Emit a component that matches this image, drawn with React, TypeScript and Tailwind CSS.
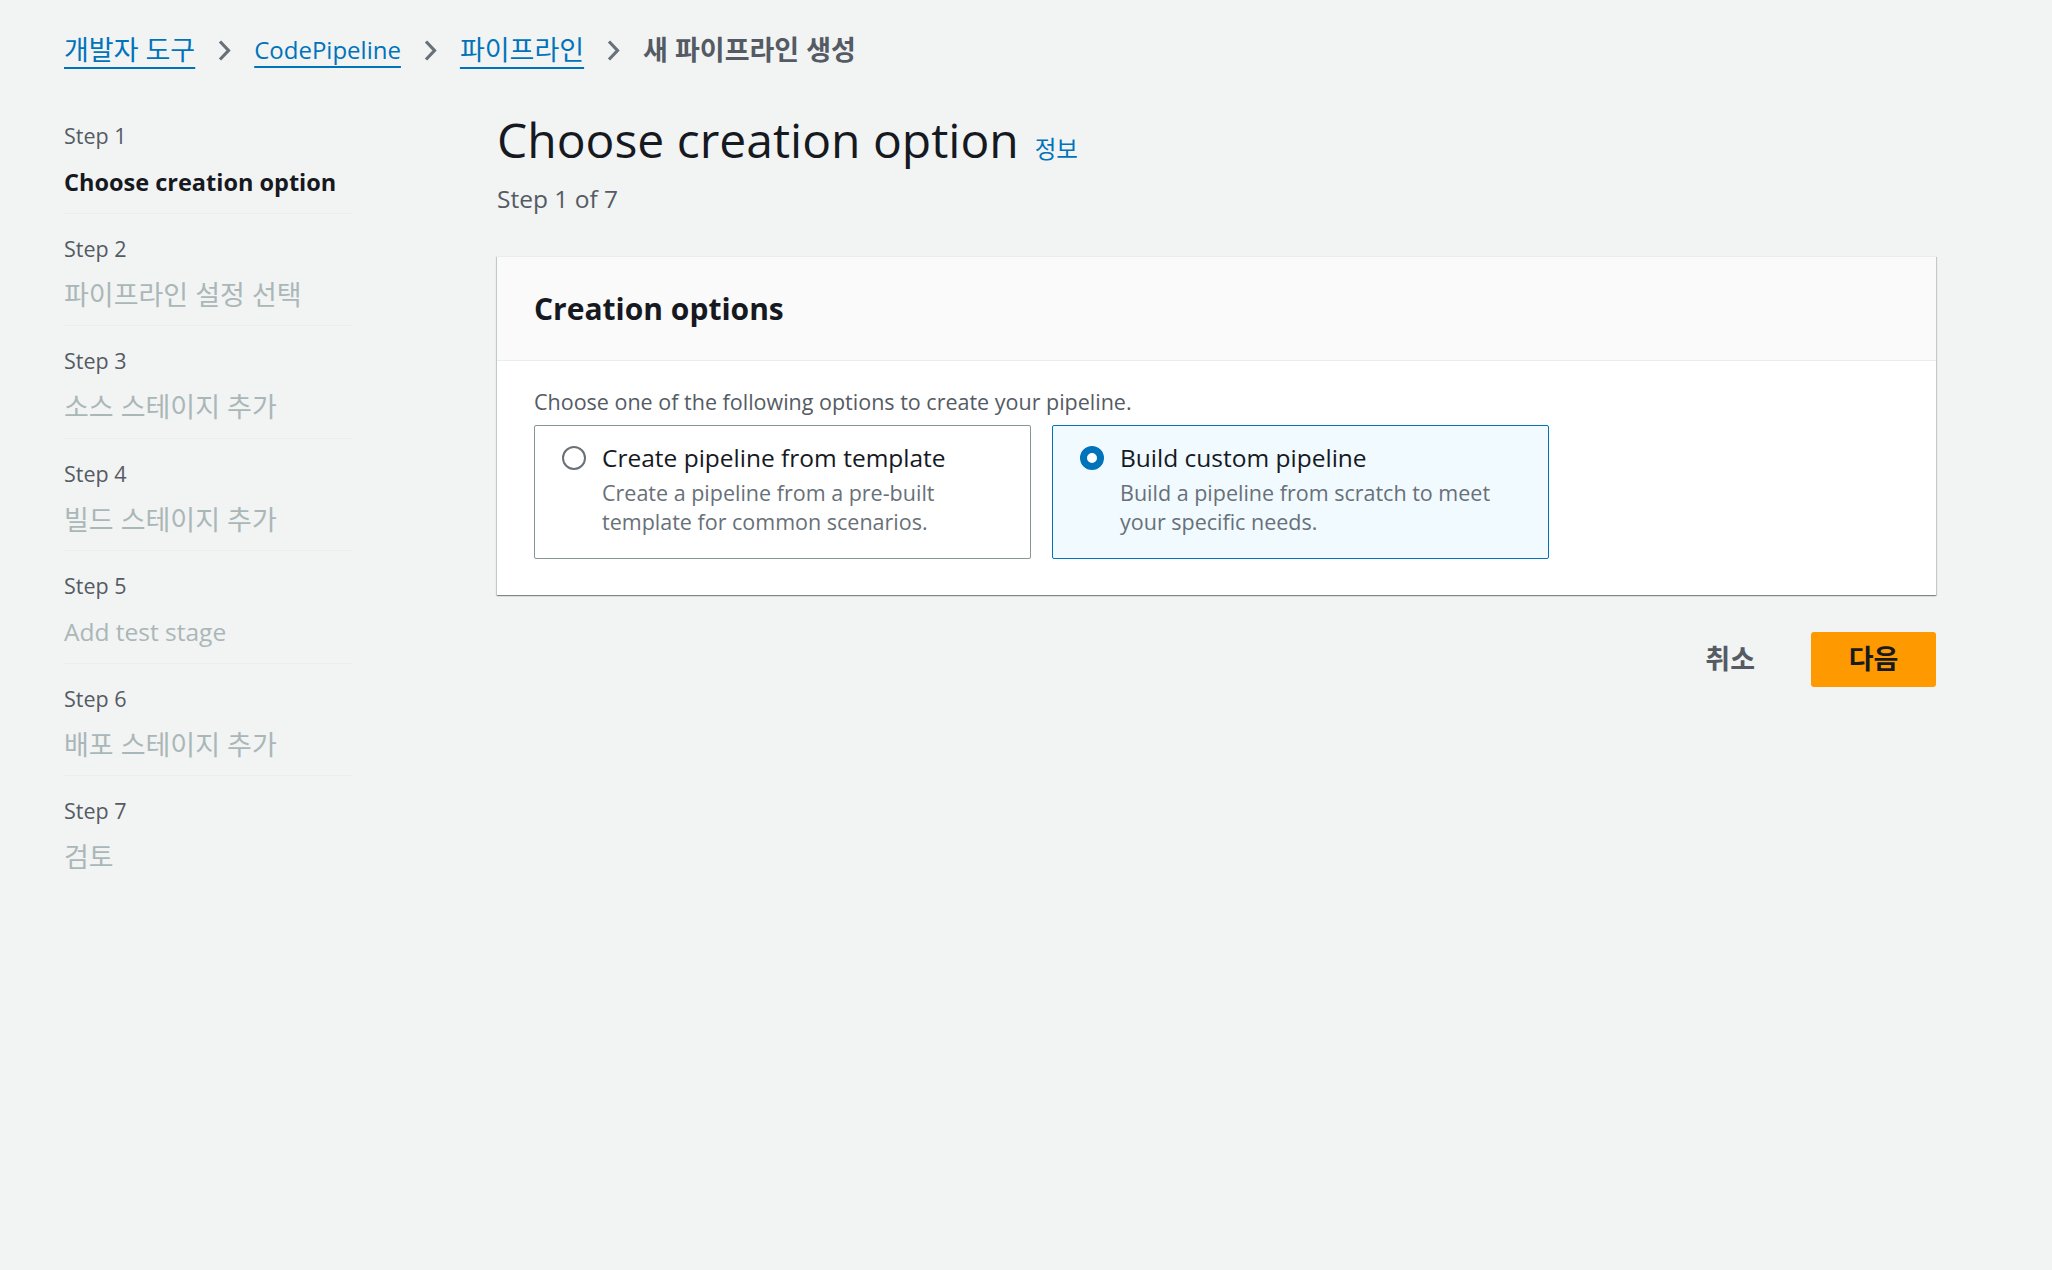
import { useState } from 'react';

const font = { fontFamily: '"Open Sans", "Noto Sans CJK KR", sans-serif' };

const steps = [
    { label: 'Step 1', title: 'Choose creation option', ko: false },
    { label: 'Step 2', title: '파이프라인 설정 선택', ko: true },
    { label: 'Step 3', title: '소스 스테이지 추가', ko: true },
    { label: 'Step 4', title: '빌드 스테이지 추가', ko: true },
    { label: 'Step 5', title: 'Add test stage', ko: false },
    { label: 'Step 6', title: '배포 스테이지 추가', ko: true },
    { label: 'Step 7', title: '검토', ko: true },
];

const options = [
    {
        id: 'template',
        title: 'Create pipeline from template',
        lines: ['Create a pipeline from a pre-built', 'template for common scenarios.'],
    },
    {
        id: 'custom',
        title: 'Build custom pipeline',
        lines: ['Build a pipeline from scratch to meet', 'your specific needs.'],
    },
];

function Chevron() {
    return (
        <svg width="13" height="23" viewBox="0 0 13 23" fill="none" className="shrink-0">
            <path d="M2 2.5l8.5 9-8.5 9" stroke="#687078" strokeWidth="3.2" strokeLinejoin="miter" />
        </svg>
    );
}

function Breadcrumbs() {
    const links = [
        { t: '개발자 도구', cls: 'text-[27px]' },
        { t: 'CodePipeline', cls: 'text-[24px]' },
        { t: '파이프라인', cls: 'text-[27px]' },
    ];
    return (
        <nav className="flex h-[36px] items-center gap-[23px] leading-[36px]">
            {links.map((l) => (
                <div key={l.t} className="flex items-center gap-[23px]">
                    <a className={`${l.cls} text-[#0073bb] underline decoration-2 underline-offset-[7px]`} href="#">
                        {l.t}
                    </a>
                    <Chevron />
                </div>
            ))}
            <span className="text-[27px] font-bold text-[#545b64]">새 파이프라인 생성</span>
        </nav>
    );
}

function Sidebar() {
    return (
        <aside className="w-[289px] shrink-0">
            {steps.map((s, i) => (
                <div
                    key={s.label}
                    className={
                        i < steps.length - 1
                            ? 'border-b border-[#eaeded] pt-[20px] pb-[14.5px]'
                            : 'pt-[20px] pb-[14.5px]'
                    }
                >
                    <div className="text-[21.5px] leading-[30px] text-[#545b64]">{s.label}</div>
                    <div
                        className={
                            i === 0
                                ? 'mt-[15px] text-[23.5px] font-bold leading-[32px] text-[#16191f]'
                                : s.ko
                                  ? 'mt-[15px] text-[27px] leading-[32px] text-[#aab7b8]'
                                  : 'mt-[15px] text-[24.5px] leading-[32px] text-[#aab7b8]'
                        }
                    >
                        {s.title}
                    </div>
                </div>
            ))}
        </aside>
    );
}

function Radio({ checked }: { checked: boolean }) {
    return checked ? (
        <span className="block h-[24px] w-[24px] shrink-0 rounded-full border-[7px] border-[#0073bb] bg-white" />
    ) : (
        <span className="block h-[24px] w-[24px] shrink-0 rounded-full border-2 border-[#687078] bg-white" />
    );
}

export default function App() {
    const [selected, setSelected] = useState('custom');

    return (
        <div className="min-h-[1270px] w-full bg-[#f2f3f3] pr-[116px] pl-[64px] pt-[32px]" style={font}>
            <Breadcrumbs />

            <div className="mt-[33px] flex gap-[144px]">
                <Sidebar />

                <main className="flex-1 pt-[11px]">
                    <div className="flex items-baseline gap-[16px]">
                        <h1 className="text-[48px] leading-[56px] font-normal text-[#16191f]">Choose creation option</h1>
                        <a href="#" className="text-[23.5px] text-[#0073bb]">
                            정보
                        </a>
                    </div>
                    <div className="mt-[15px] text-[24.5px] leading-[32px] text-[#545b64]">Step 1 of 7</div>

                    <section className="mt-[41px] border-t border-[#eaeded] bg-white shadow-[0_1px_1px_0_rgba(0,28,36,0.3),1px_1px_1px_0_rgba(0,28,36,0.15),-1px_1px_1px_0_rgba(0,28,36,0.15)]">
                        <div className="flex h-[104px] items-center border-b border-[#eaeded] bg-[#fafafa] px-[37px]">
                            <h2 className="text-[30px] leading-[40px] font-bold text-[#16191f]">Creation options</h2>
                        </div>
                        <div className="px-[37px] pt-[26px] pb-[36px]">
                            <p className="text-[21.5px] leading-[30px] text-[#545b64]">
                                Choose one of the following options to create your pipeline.
                            </p>
                            <div className="mt-[8px] flex gap-[21px]">
                                {options.map((o) => {
                                    const on = selected === o.id;
                                    return (
                                        <button
                                            key={o.id}
                                            type="button"
                                            onClick={() => setSelected(o.id)}
                                            className={
                                                on
                                                    ? 'flex h-[134px] w-[497px] gap-[16px] rounded-[2px] border border-[#0073bb] bg-[#f1faff] pt-[16px] pl-[27px] text-left'
                                                    : 'flex h-[134px] w-[497px] gap-[16px] rounded-[2px] border border-[#879596] bg-white pt-[16px] pl-[27px] text-left'
                                            }
                                        >
                                            <span className="flex h-[32px] items-center">
                                                <Radio checked={on} />
                                            </span>
                                            <span className="flex flex-col">
                                                <span className="text-[24.5px] leading-[32px] text-[#16191f]">{o.title}</span>
                                                <span className="mt-[4px] text-[21.5px] leading-[29px] text-[#687078]">
                                                    {o.lines.map((l) => (
                                                        <span key={l} className="block">
                                                            {l}
                                                        </span>
                                                    ))}
                                                </span>
                                            </span>
                                        </button>
                                    );
                                })}
                            </div>
                        </div>
                    </section>

                    <div className="mt-[37px] flex items-center justify-end gap-[21px]">
                        <button type="button" className="px-[35px] text-[27px] font-bold text-[#545b64]">
                            취소
                        </button>
                        <button
                            type="button"
                            className="h-[55px] w-[125px] rounded-[3px] bg-[#ff9900] text-[27px] font-bold text-[#16191f]"
                        >
                            다음
                        </button>
                    </div>
                </main>
            </div>
        </div>
    );
}
